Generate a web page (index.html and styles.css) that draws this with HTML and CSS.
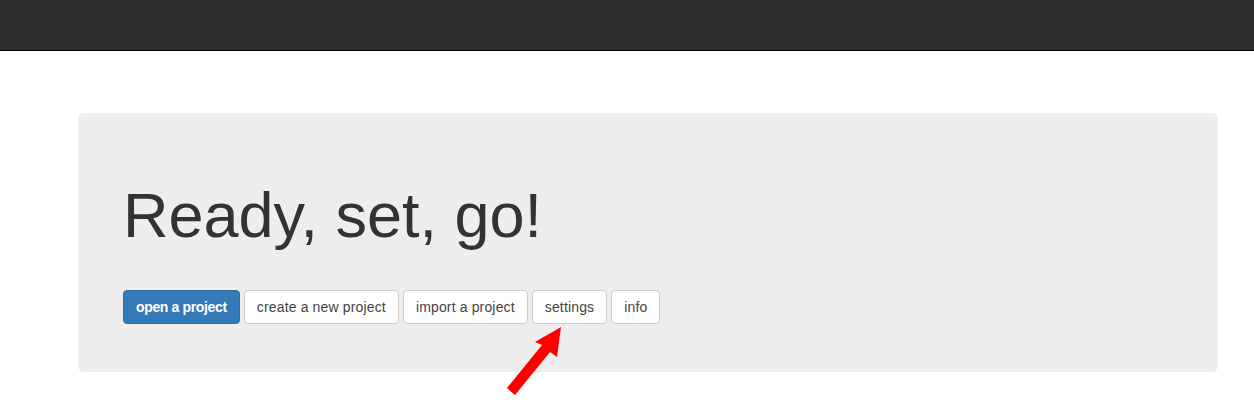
FILE: index.html
```html
<!DOCTYPE html>
<html>
<head>
<meta charset="utf-8">
<link rel="stylesheet" href="styles.css">
</head>
<body>
<div class="navbar"></div>
<div class="container">
  <div class="jumbotron">
    <h1>Ready, set, go!</h1>
    <div class="actions">
      <button class="btn btn-primary">open a project</button>
      <button class="btn">create a new project</button>
      <button class="btn">import a project</button>
      <button class="btn">settings</button>
      <button class="btn">info</button>
    </div>
  </div>
</div>
<svg class="arrow" width="80" height="90" viewBox="0 0 80 90">
  <polygon fill="#ff0000" points="59,7 55,37 48,32 13,75 5,68 40,25 33,22"/>
</svg>
</body>
</html>
```
FILE: styles.css
```css
html, body {
  margin: 0;
  padding: 0;
  background: #fff;
  font-family: "Liberation Sans", Arial, sans-serif;
  color: #333;
  font-size: 14px;
}
.navbar {
  height: 50px;
  background: #2d2d2d;
  border-bottom: 1px solid #000;
}
.container {
  padding: 62px 0 0 78px;
}
.jumbotron {
  width: 1140px;
  box-sizing: border-box;
  background: #eeeeee;
  border-radius: 6px;
  padding: 48px 45px 48px 45px;
}
.jumbotron h1 {
  margin: 20px 0 0 0;
  font-size: 63px;
  font-weight: 500;
  line-height: 1.1;
  color: #333;
}
.actions {
  margin-top: 40px;
  display: flex;
  gap: 4px;
}
.btn {
  height: 34px;
  padding: 6px 12px;
  font-family: "Liberation Sans", Arial, sans-serif;
  font-size: 14px;
  line-height: 20px;
  letter-spacing: 0.15px;
  color: #444;
  background: #fff;
  border: 1px solid #ccc;
  border-radius: 4px;
  box-sizing: border-box;
  cursor: pointer;
}
.btn-primary {
  background: #337ab7;
  border-color: #2e6da4;
  color: #fff;
  font-weight: bold;
  letter-spacing: -0.35px;
}
.arrow {
  position: absolute;
  left: 502px;
  top: 320px;
}
```
